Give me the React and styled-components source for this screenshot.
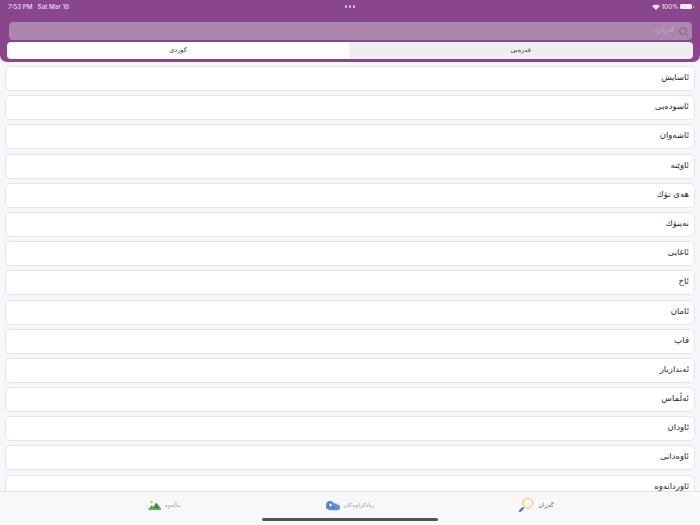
import React from 'react'
import styled, { createGlobalStyle } from 'styled-components'

const GlobalStyle = createGlobalStyle`
  html, body {
    margin: 0;
    padding: 0;
    background: #f5f7fd;
    font-family: "DejaVu Sans", "Liberation Sans", sans-serif;
  }
`
const Page = styled.div`
  width: 700px;
  height: 525px;
  display: flex;
  flex-direction: column;
  overflow: hidden;
  background: #f5f7fd;
`
const Header = styled.header`
  flex: none;
  height: 62px;
  box-sizing: border-box;
  background: #89468c;
  border-radius: 0 0 7px 7px;
  padding: 0 7px;
  display: flex;
  flex-direction: column;
`
const StatusBar = styled.div`
  height: 13px;
  padding: 0 1px;
  display: flex;
  align-items: center;
  justify-content: space-between;
  color: #e9dcea;
  font-family: "Inter", "Liberation Sans", sans-serif;
  font-size: 6.3px;
  font-weight: 500;
`
const StatusSide = styled.div`
  flex: 1;
  display: flex;
  align-items: center;
  gap: ${p => p.$gap}px;
  justify-content: ${p => (p.$end ? 'flex-end' : 'flex-start')};
`
const Dots = styled.div`
  display: flex;
  gap: 1.5px;
  span {
    width: 2.5px;
    height: 2.5px;
    border-radius: 50%;
    background: #d9c6da;
  }
`
const Battery = styled.div`
  position: relative;
  width: 12px;
  height: 5px;
  border-radius: 1.5px;
  background: #f4edf4;
  &::after {
    content: "";
    position: absolute;
    left: 12.5px;
    top: 1.5px;
    width: 1px;
    height: 2px;
    background: #c9b0ca;
  }
`
const SearchBar = styled.div`
  height: 18px;
  margin: 9px 1px 0 2px;
  border-radius: 4px;
  background: #ab87ad;
  display: flex;
  align-items: center;
  direction: rtl;
  padding: 0 3px;
  gap: 4px;
  color: #c6b0c8;
  font-size: 6.5px;
`
const SearchText = styled.span`
  padding-bottom: 2px;
`
const Tabs = styled.div`
  display: grid;
  grid-template-columns: 342px 344px;
  height: 17px;
  margin-top: 2px;
`
const Tab = styled.div`
  display: flex;
  align-items: center;
  justify-content: center;
  padding-bottom: 1px;
  box-sizing: border-box;
  font-size: 6.5px;
  color: #333;
  background: ${p => (p.$active ? '#fff' : '#eeeeee')};
  border-radius: ${p => (p.$active ? '4px 0 0 4px' : '0 4px 4px 0')};
`
const List = styled.div`
  flex: 1;
  min-height: 0;
  overflow: hidden;
  padding: 4px 5px 0;
  display: flex;
  flex-direction: column;
  gap: 4.2px;
`
const Row = styled.div`
  flex: none;
  height: 25px;
  box-sizing: border-box;
  background: #fff;
  border: 1px solid #e4e5ec;
  border-radius: 5px;
  direction: rtl;
  display: flex;
  align-items: center;
  padding: 0 5px 3px;
  font-size: 8.5px;
  color: #2a2a2a;
`
const BottomBar = styled.nav`
  flex: none;
  height: 34px;
  box-sizing: border-box;
  background: #f8f8fb;
  border-top: 1px solid #e3e3e6;
  display: grid;
  grid-template-columns: repeat(3, 186px);
  justify-content: center;
  position: relative;
`
const BarItem = styled.div`
  display: flex;
  align-items: center;
  justify-content: center;
  height: 26px;
  gap: 4px;
  font-size: 5.8px;
  color: ${p => (p.$active ? '#4d5a7c' : '#a0a0a6')};
`
const HomeIndicator = styled.div`
  position: absolute;
  left: 262px;
  bottom: 4px;
  width: 176px;
  height: 3px;
  border-radius: 2px;
  background: #555;
`

const words = ['ئاسایش', 'ئاسودەیی', 'ئاشەوان', 'ئاوێنە', 'هەی نۆك', 'نەینۆك', 'ئاغایی', 'ئاخ', 'ئامان', 'قاپ', 'ئەندازیار', 'ئەڵماس', 'ئاودان', 'ئاوەدانی', 'ئاوردانەوە']

const WifiIcon = () => (
  <svg width="8" height="6" viewBox="0 0 16 12">
    <path d="M8 12 0 4a11.500 11.500 0 0 1 16 0z" fill="#f1e8f1" />
  </svg>
)
const SearchIcon = () => (
  <svg width="11" height="11" viewBox="0 0 24 24" fill="none" stroke="#7d5a80" strokeWidth="1.8">
    <circle cx="11" cy="11" r="7.5" />
    <path d="m17 17 5 5" />
  </svg>
)
const LensIcon = () => (
  <svg width="16" height="16" viewBox="0 0 16 16" fill="none">
    <circle cx="9.800" cy="6.200" r="4.800" fill="#fffdf6" stroke="#fbc76b" strokeWidth="1.400" />
    <path d="M6.200 9.800 4.600 11.400" stroke="#f0b060" strokeWidth="1" />
    <path d="M4.800 11.200 2 14" stroke="#2a7be0" strokeWidth="2.200" strokeLinecap="round" />
  </svg>
)
const CloudIcon = () => (
  <svg width="14" height="11" viewBox="0 0 15 11">
    <path d="M4.500 0.500a4.500 4.500 0 0 1 4.200 2.800 3.500 3.500 0 0 1 3.500 1.200A3 3 0 0 1 12 10.500H4.500a5 5 0 0 1 0-10z" fill="#5a90e6" />
    <circle cx="5" cy="5" r="2.300" fill="#d6e4f9" stroke="#2c5aa8" strokeWidth=".8" />
    <path d="m7 7 2.200 1.800" stroke="#2c5aa8" strokeWidth="1" />
  </svg>
)
const LandscapeIcon = () => (
  <svg width="13" height="11" viewBox="0 0 13 11">
    <circle cx="3.500" cy="2" r="1.500" fill="#f6c945" />
    <path d="M0 10 3.500 5.500 5.500 7 8 2.500 13 8.500V10z" fill="#35963f" />
    <path d="M0 10 4 7.500 8 8.500 13 8V10z" fill="#5cb84e" />
  </svg>
)

export default function App () {
  return (
    <Page>
      <GlobalStyle />
      <Header>
        <StatusBar>
          <StatusSide $gap={5}><span>7:53 PM</span><span>Sat Mar 18</span></StatusSide>
          <Dots><span /><span /><span /></Dots>
          <StatusSide $end $gap={1.5}><WifiIcon /><span>100%</span><Battery /></StatusSide>
        </StatusBar>
        <SearchBar><SearchIcon /><SearchText>گەڕان...</SearchText></SearchBar>
        <Tabs>
          <Tab $active>کوردی</Tab>
          <Tab>عەرەبی</Tab>
        </Tabs>
      </Header>
      <List>
        {words.map(word => <Row key={word}>{word}</Row>)}
      </List>
      <BottomBar>
        <BarItem><LandscapeIcon /><span>ماڵەوە</span></BarItem>
        <BarItem><CloudIcon /><span>زیادکراوەکان</span></BarItem>
        <BarItem $active><LensIcon /><span>گەڕان</span></BarItem>
        <HomeIndicator />
      </BottomBar>
    </Page>
  )
}
